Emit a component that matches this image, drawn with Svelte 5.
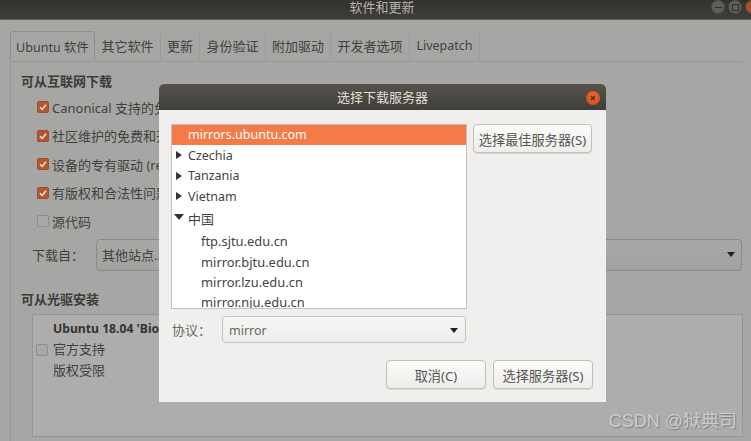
<script>
  const tabs = ['Ubuntu 软件', '其它软件', '更新', '身份验证', '附加驱动', '开发者选项', 'Livepatch'];
  const sources = ['Canonical 支持的免费和开源软件 (main)', '社区维护的免费和开源软件 (universe)', '设备的专有驱动 (restricted)', '有版权和合法性问题的软件 (multiverse)'];
  const countries = ['Czechia', 'Tanzania', 'Vietnam'];
  const mirrors = ['ftp.sjtu.edu.cn', 'mirror.bjtu.edu.cn', 'mirror.lzu.edu.cn', 'mirror.nju.edu.cn'];
</script>

<div class="window">
  <header class="titlebar">
    <span class="title">软件和更新</span>
    <div class="wm">
      <span class="wm-btn"><i class="dash"></i></span>
      <span class="wm-btn"><i class="square"></i></span>
      <span class="wm-btn close"></span>
    </div>
  </header>

  <div class="body">
    <div class="tabs">
      {#each tabs as tab, i}
        <div class="tab" class:active={i === 0}>{tab}</div>
      {/each}
    </div>

    <div class="panel">
      <h3>可从互联网下载</h3>
      <div class="checks">
        {#each sources as s}
          <div class="check-row"><span class="cb on"><svg viewBox="0 0 10 10"><path d="M2 5.2 L4.2 7.4 L8 2.8" /></svg></span>{s}</div>
        {/each}
        <div class="check-row"><span class="cb"></span>源代码</div>
      </div>
      <div class="download">
        <span class="dl-label">下载自：</span>
        <div class="combo dim"><span>其他站点...</span><i class="arrow"></i></div>
      </div>
      <h3 class="second">可从光驱安装</h3>
      <div class="cdrom">
        <span class="cb"></span>
        <div class="cd-text">
          <b>Ubuntu 18.04 'Bionic Beaver'</b>
          <span>官方支持</span>
          <span>版权受限</span>
        </div>
      </div>
    </div>
  </div>

  <span class="watermark">CSDN @狱典司</span>

  <section class="dialog">
    <header class="dlg-title">
      <span>选择下载服务器</span>
      <span class="dlg-close"><svg viewBox="0 0 8 8"><path d="M2 2 L6 6 M6 2 L2 6" /></svg></span>
    </header>
    <div class="dlg-body">
      <div class="top">
        <div class="list">
          <div class="row selected">mirrors.ubuntu.com</div>
          {#each countries as c}
            <div class="row"><i class="tri right"></i>{c}</div>
          {/each}
          <div class="row cn"><i class="tri down"></i>中国</div>
          {#each mirrors as m}
            <div class="row sub">{m}</div>
          {/each}
        </div>
        <button class="btn best">选择最佳服务器(S)</button>
      </div>
      <div class="proto">
        <span class="proto-label">协议：</span>
        <div class="combo light"><span>mirror</span><i class="arrow"></i></div>
      </div>
      <div class="actions">
        <button class="btn cancel">取消(C)</button>
        <button class="btn choose">选择服务器(S)</button>
      </div>
    </div>
  </section>
</div>

<style>
  :global(body) { margin: 0; background: #a6a6a4; }
  .window {
    position: relative; width: 751px; height: 441px; overflow: hidden;
    font-family: "Noto Sans", "Noto Sans CJK SC", sans-serif; font-size: 13px; color: #41413d;
    background: #a6a6a4;
  }
  .titlebar {
    height: 19px; background: linear-gradient(#33322e, #3e3d38); border-bottom: 1px solid #5e5d59;
    display: flex; align-items: flex-start; justify-content: center; position: relative;
  }
  .title { color: #b5b3ac; font-size: 13px; line-height: 14px; margin-left: 13px; }
  .wm { position: absolute; right: -8px; top: 0; display: flex; gap: 3px; }
  .wm-btn {
    width: 14px; height: 14px; box-sizing: border-box; border-radius: 50%; background: #5f5e59; border: 1px solid #4c4b46;
    display: flex; align-items: center; justify-content: center;
  }
  .wm-btn.close { background: #a8502c; }
  .dash { width: 7px; height: 1px; background: #2e2d2a; }
  .square { width: 5px; height: 5px; border: 1px solid #2e2d2a; }

  .body { padding: 11px 8px 0 10px; }
  .tabs { display: flex; height: 29px; }
  .tab {
    padding: 0; display: flex; align-items: center; justify-content: center; border-right: 1px solid #9b9b99;
    white-space: nowrap; box-sizing: border-box;
  }
  .tab.active {
    background: #a6a6a4; border: 1px solid #8f8f8d; border-bottom: none;
    border-radius: 3px 3px 0 0; font-size: 12.5px;
  }
  .tab:nth-child(1) { width: 85px; }
  .tab:nth-child(2) { width: 66px; }
  .tab:nth-child(3) { width: 39px; }
  .tab:nth-child(4) { width: 66px; }
  .tab:nth-child(5) { width: 65px; }
  .tab:nth-child(6) { width: 79px; }
  .tab:nth-child(7) { width: 70px; font-size: 12.5px; }

  .panel {
    border-top: 1px solid #989896; border-left: 1px solid #989896; height: 400px;
    padding: 10px 0 0 10px; margin-top: 1px;
  }
  h3 { margin: 0; font-size: 13px; font-weight: 700; line-height: 19px; color: #3c3c39; }
  .checks { padding: 2px 0 0 16px; }
  .check-row { height: 28.5px; display: flex; align-items: center; gap: 3px; white-space: nowrap; }
  .cb {
    width: 10px; height: 10px; border-radius: 2px; border: 1px solid #8d8d8b; flex: none;
    display: inline-flex; background: #a9a9a7;
  }
  .cb.on { background: #b2572f; border-color: #a04c28; }
  .cb svg { width: 10px; height: 10px; fill: none; stroke: #e8e4df; stroke-width: 1.6; }

  .download { display: flex; align-items: center; margin: 3px 0 0 11px; }
  .dl-label { width: 64px; white-space: nowrap; }
  .combo {
    flex: 1; display: flex; align-items: center; justify-content: space-between; box-sizing: border-box;
    border-radius: 4px; border: 1px solid #8a8a88;
  }
  .combo.dim { height: 32px; padding: 0 6px 0 5px; background: linear-gradient(#a8a8a6, #a2a2a0); margin-right: 1px; }
  .arrow { width: 0; height: 0; border-left: 4.5px solid transparent; border-right: 4.5px solid transparent; border-top: 5px solid #1f1f1d; }
  .second { margin-top: 19px; }
  .cdrom {
    margin: 5px 0 0 11px; height: 123px; box-sizing: border-box; border: 1px solid #949492;
    background: #adadad; padding: 4px 0 0 3px; display: flex; align-items: flex-start; gap: 5px;
  }
  .cdrom .cb { margin-top: 25px; }
  .cd-text { display: flex; flex-direction: column; line-height: 20.5px; }
  .cd-text b { color: #33332f; font-size: 12.2px; }

  .watermark {
    position: absolute; right: 14px; bottom: 9px; color: #cdcdcd; font-size: 18px; font-family: "Liberation Sans", "Noto Sans CJK SC", sans-serif;
    text-shadow: 1px 1px 1px #7c7c7c;
  }

  .dialog {
    position: absolute; left: 159px; top: 84px; width: 447px; height: 318px; background: #f0efed;
    border-radius: 5px 5px 0 0; overflow: hidden;
  }
  .dlg-title {
    height: 26px; background: linear-gradient(#55534c, #3f3e38); display: flex; align-items: center; justify-content: center;
    color: #e0ddd6; font-size: 13px; line-height: 18px; position: relative; padding-bottom: 1px; box-sizing: border-box;
  }
  .dlg-close {
    position: absolute; right: 6px; top: 7px; width: 14px; height: 14px; border-radius: 50%;
    background: radial-gradient(circle at 50% 40%, #ee6a32, #cf4515); display: flex; align-items: center; justify-content: center;
  }
  .dlg-close svg { width: 8px; height: 8px; fill: none; stroke: #4a2413; stroke-width: 1.2; }
  .dlg-body { padding: 14px 13px 0 12px; }
  .top { display: flex; gap: 6px; align-items: flex-start; }
  .list {
    width: 296px; height: 185px; box-sizing: border-box; border: 1px solid #c2c1bd; background: #fff;
    overflow: hidden; flex: none;
  }
  .row { height: 20.3px; display: flex; align-items: center; padding-left: 16px; white-space: nowrap; position: relative; color: #44443f; font-size: 12.5px; }
  .row.selected { background: #f47b47; color: #fff; padding-bottom: 2px; box-sizing: border-box; }
  .row.cn { height: 25px; padding-bottom: 1px; box-sizing: border-box; font-size: 13px; }
  .row.sub { padding-left: 29px; font-size: 12.9px; }
  .tri { position: absolute; width: 0; height: 0; }
  .tri.right { left: 4px; top: 6px; border-top: 4.5px solid transparent; border-bottom: 4.5px solid transparent; border-left: 6px solid #333; }
  .tri.down { left: 2px; top: 8px; border-left: 5px solid transparent; border-right: 5px solid transparent; border-top: 6px solid #333; }
  .btn {
    font: inherit; font-size: 13.2px; color: #55554f; border: 1px solid #c0bfba; border-radius: 4px; padding: 1px 0 0; box-sizing: border-box;
    background: linear-gradient(#fbfbfa, #eeedeb); box-shadow: 0 1px 0 #d9d8d4; white-space: nowrap;
  }
  .best { width: 119px; height: 29px; }
  .proto { display: flex; align-items: center; margin-top: 7px; }
  .proto-label { width: 51px; color: #6a6a65; white-space: nowrap; padding-left: 1px; box-sizing: border-box; }
  .combo.light { flex: none; width: 244px; height: 27px; padding: 1px 7px 0 6px; background: linear-gradient(#f6f6f5, #eeedeb); border-color: #c6c5c1; color: #66665f; font-size: 12.5px; }
  .actions { display: flex; justify-content: flex-end; gap: 7px; margin: 17px 0 0; }
  .cancel, .choose { width: 100px; height: 29px; }
</style>
